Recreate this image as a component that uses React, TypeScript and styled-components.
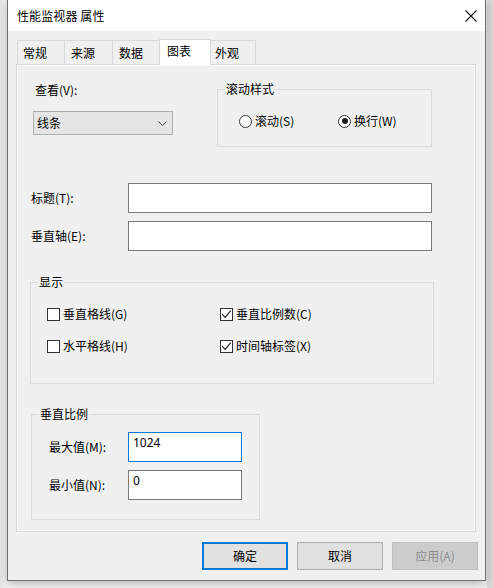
import styled, { createGlobalStyle, css } from "styled-components";

const GlobalStyle = createGlobalStyle`
  html, body {
    margin: 0;
    padding: 0;
  }
  body {
    width: 493px;
    height: 588px;
    overflow: hidden;
    background: #ececec;
    font-family: "Noto Sans CJK SC", "Noto Sans", sans-serif;
    font-size: 12px;
    line-height: 16px;
    color: #000;
  }
`;

const Desktop = styled.div`
  width: 493px;
  height: 588px;
  box-sizing: border-box;
  padding-left: 7px;
  display: flex;
  align-items: flex-start;
  background: linear-gradient(90deg, #e4e4e4 0, #f3f3f3 5px, #f3f3f3 486px, #dadada 488px);
`;

const Window = styled.div`
  width: 479px;
  height: 582px;
  margin-top: -1px;
  box-sizing: border-box;
  border: 1px solid #6f6f6f;
  background: #f0f0f0;
  display: flex;
  flex-direction: column;
  box-shadow: 0 2px 10px rgba(0, 0, 0, 0.28);
`;

const TitleBar = styled.div`
  height: 31px;
  flex: none;
  background: #fff;
  display: flex;
  align-items: center;
  justify-content: space-between;
  padding-left: 9px;
`;

const Title = styled.span`
  font-size: 12px;
  letter-spacing: 0.1px;
`;

const CloseButton = styled.div`
  width: 29px;
  height: 31px;
  display: flex;
  align-items: center;
  justify-content: center;
`;

const Body = styled.div`
  flex: 1;
  display: flex;
  flex-direction: column;
  padding: 8px 9px 0 8px;
`;

const TabStrip = styled.div`
  display: flex;
  align-items: flex-end;
  padding-left: 1px;
`;

const Tab = styled.div<{ $active?: boolean; $first?: boolean; $last?: boolean }>`
  box-sizing: border-box;
  width: ${(p) => (p.$last ? 47 : 48)}px;
  height: 24px;
  border: 1px solid #d9d9d9;
  border-bottom: none;
  border-left: ${(p) => (p.$first ? "1px solid #d9d9d9" : "none")};
  padding: 1px 0 0 ${(p) => (p.$first ? 5 : 6)}px;
  line-height: 22px;
  background: #f0f0f0;
  white-space: nowrap;

  ${(p) =>
    p.$active &&
    css`
      position: relative;
      z-index: 1;
      width: 52px;
      height: 26px;
      margin: 0 -2px -1px -2px;
      padding: 0 0 0 7px;
      border-left: 1px solid #d9d9d9;
      background: #fff;
    `}
`;

const TabPanel = styled.div`
  height: 468px;
  box-sizing: border-box;
  border: 1px solid #d9d9d9;
  background: #f0f0f0;
  box-shadow: inset 0 0 0 1px #fbfbfb;
  display: flex;
  flex-direction: column;
`;

const TopRow = styled.div`
  display: flex;
  align-items: flex-start;
  margin-top: 17px;
  padding-left: 16px;
`;

const ViewColumn = styled.div`
  width: 140px;
  display: flex;
  flex-direction: column;
`;

const FieldLabel = styled.span<{ $indent?: number }>`
  padding-left: ${(p) => p.$indent ?? 0}px;
  white-space: nowrap;
`;

const Select = styled.div`
  margin-top: 13px;
  height: 24px;
  box-sizing: border-box;
  border: 1px solid #adadad;
  background: #e5e5e5;
  display: flex;
  align-items: center;
  justify-content: space-between;
  padding: 0 5px 0 3px;
`;

const GroupBox = styled.div<{ $width: number; $height: number; $top: number; $left: number }>`
  position: relative;
  flex: none;
  box-sizing: border-box;
  width: ${(p) => p.$width}px;
  height: ${(p) => p.$height}px;
  margin-top: ${(p) => p.$top}px;
  margin-left: ${(p) => p.$left}px;
  border: 1px solid #dcdcdc;
`;

const Caption = styled.span`
  position: absolute;
  top: -9px;
  left: 7px;
  padding: 0 1px;
  background: #f0f0f0;
  white-space: nowrap;
`;

const RadioRow = styled.div`
  display: grid;
  grid-template-columns: 99px auto;
  padding: 23px 0 0 21px;
`;

const Option = styled.label`
  display: flex;
  align-items: center;
  gap: 3px;
  height: 16px;
  white-space: nowrap;
`;

const RadioCircle = styled.span<{ $checked?: boolean }>`
  width: 13px;
  height: 13px;
  box-sizing: border-box;
  border: 1px solid #333;
  border-radius: 50%;
  background: #fff;
  display: grid;
  place-items: center;

  &::after {
    content: "";
    width: 6px;
    height: 6px;
    border-radius: 50%;
    background: ${(p) => (p.$checked ? "#1a1a1a" : "transparent")};
  }
`;

const FormGrid = styled.div<{ $labelWidth: number; $top: number; $left: number }>`
  display: grid;
  grid-template-columns: ${(p) => p.$labelWidth}px auto;
  row-gap: 8px;
  align-items: center;
  margin-top: ${(p) => p.$top}px;
  padding-left: ${(p) => p.$left}px;
`;

const TextBox = styled.div<{ $width: number; $focused?: boolean }>`
  width: ${(p) => p.$width}px;
  height: 30px;
  box-sizing: border-box;
  border: 1px solid ${(p) => (p.$focused ? "#0078d7" : "#7a7a7a")};
  background: #fff;
  padding: 2px 4px;
  font-family: "Noto Sans", "Noto Sans CJK SC", sans-serif;
`;

const CheckGrid = styled.div`
  display: grid;
  grid-template-columns: 173px auto;
  row-gap: 14px;
  padding: 22px 0 0 16px;
`;

const CheckBox = styled.span`
  width: 13px;
  height: 13px;
  box-sizing: border-box;
  border: 1px solid #333;
  background: #fff;
  display: grid;
  place-items: center;
`;

const CheckOption = styled(Option)`
  height: 18px;
`;

const ButtonRow = styled.div`
  display: flex;
  justify-content: flex-end;
  gap: 9px;
  margin: 10px -2px 0 0;
`;

type ButtonKind = "default" | "normal" | "disabled";

const Button = styled.div<{ $kind: ButtonKind }>`
  width: 86px;
  height: 28px;
  box-sizing: border-box;
  display: flex;
  align-items: center;
  justify-content: center;
  background: #e1e1e1;
  border: 1px solid #adadad;

  ${(p) =>
    p.$kind === "default" &&
    css`
      border: 2px solid #0078d7;
    `}

  ${(p) =>
    p.$kind === "disabled" &&
    css`
      background: #cccccc;
      border-color: #bfbfbf;
      color: #8c8c8c;
    `}
`;

const CloseIcon = () => (
  <svg width="12" height="12" viewBox="0 0 12 12">
    <path d="M0.5 0.5 L11.5 11.5 M11.5 0.5 L0.5 11.5" stroke="#111" strokeWidth="1.1" fill="none" />
  </svg>
);

const ChevronIcon = () => (
  <svg width="9" height="5" viewBox="0 0 9 5">
    <polyline points="0.5,0.5 4.5,4.5 8.5,0.5" stroke="#444" strokeWidth="1" fill="none" />
  </svg>
);

const CheckMark = () => (
  <svg width="11" height="11" viewBox="0 0 11 11">
    <polyline points="1.2,5.2 4.2,8.4 9.8,1.6" stroke="#222" strokeWidth="1.1" fill="none" />
  </svg>
);

const Radio = ({ label, checked }: { label: string; checked?: boolean }) => (
  <Option>
    <RadioCircle $checked={checked} />
    {label}
  </Option>
);

const Check = ({ label, checked }: { label: string; checked?: boolean }) => (
  <CheckOption>
    <CheckBox>{checked && <CheckMark />}</CheckBox>
    {label}
  </CheckOption>
);

const tabs = ["常规", "来源", "数据", "图表", "外观"];
const activeTab = "图表";

export default function App() {
  return (
    <>
      <GlobalStyle />
      <Desktop>
        <Window>
          <TitleBar>
            <Title>性能监视器 属性</Title>
            <CloseButton>
              <CloseIcon />
            </CloseButton>
          </TitleBar>

          <Body>
            <TabStrip>
              {tabs.map((t, i) => (
                <Tab
                  key={t}
                  $first={i === 0}
                  $last={i === tabs.length - 1}
                  $active={t === activeTab}
                >
                  {t}
                </Tab>
              ))}
            </TabStrip>

            <TabPanel>
              <TopRow>
                <ViewColumn>
                  <FieldLabel $indent={2}>查看(V):</FieldLabel>
                  <Select>
                    <span>线条</span>
                    <ChevronIcon />
                  </Select>
                </ViewColumn>

                <GroupBox $width={215} $height={58} $top={7} $left={44}>
                  <Caption>滚动样式</Caption>
                  <RadioRow>
                    <Radio label="滚动(S)" />
                    <Radio label="换行(W)" checked />
                  </RadioRow>
                </GroupBox>
              </TopRow>

              <FormGrid $labelWidth={97} $top={36} $left={14}>
                <FieldLabel>标题(T):</FieldLabel>
                <TextBox $width={304} />
                <FieldLabel>垂直轴(E):</FieldLabel>
                <TextBox $width={304} />
              </FormGrid>

              <GroupBox $width={404} $height={102} $top={31} $left={13}>
                <Caption>显示</Caption>
                <CheckGrid>
                  <Check label="垂直格线(G)" />
                  <Check label="垂直比例数(C)" checked />
                  <Check label="水平格线(H)" />
                  <Check label="时间轴标签(X)" checked />
                </CheckGrid>
              </GroupBox>

              <GroupBox $width={229} $height={106} $top={30} $left={14}>
                <Caption>垂直比例</Caption>
                <FormGrid $labelWidth={79} $top={17} $left={17}>
                  <FieldLabel>最大值(M):</FieldLabel>
                  <TextBox $width={114} $focused>
                    1024
                  </TextBox>
                  <FieldLabel>最小值(N):</FieldLabel>
                  <TextBox $width={114}>0</TextBox>
                </FormGrid>
              </GroupBox>
            </TabPanel>

            <ButtonRow>
              <Button $kind="default">确定</Button>
              <Button $kind="normal">取消</Button>
              <Button $kind="disabled">应用(A)</Button>
            </ButtonRow>
          </Body>
        </Window>
      </Desktop>
    </>
  );
}
